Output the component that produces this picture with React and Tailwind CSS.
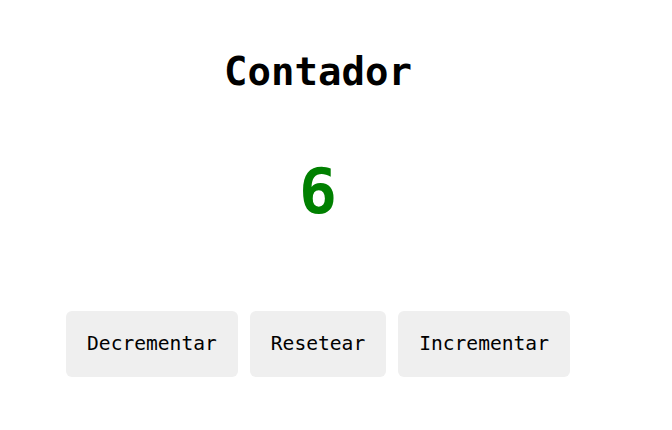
import React, { useState } from "react";

export default function App() {
  const [count, setCount] = useState(6);
  const btn =
    "bg-[#efefef] text-black rounded-[6px] px-[21px] py-[21px] text-[19.6px] leading-[24px] font-['DejaVu_Sans_Mono','Liberation_Mono',monospace]";
  return (
    <div className="w-[636px] bg-white text-center pt-[52px] font-['DejaVu_Sans_Mono','Liberation_Mono',monospace]">
      <h1 className="text-[39px] leading-[39px] font-bold text-black">Contador</h1>
      <div className="mt-[69px] text-[63px] leading-[63px] font-bold text-[#008000]">{count}</div>
      <div className="mt-[88px] flex justify-center gap-[12px]">
        <button className={btn} onClick={() => setCount(count - 1)}>Decrementar</button>
        <button className={btn} onClick={() => setCount(0)}>Resetear</button>
        <button className={btn} onClick={() => setCount(count + 1)}>Incrementar</button>
      </div>
    </div>
  );
}
